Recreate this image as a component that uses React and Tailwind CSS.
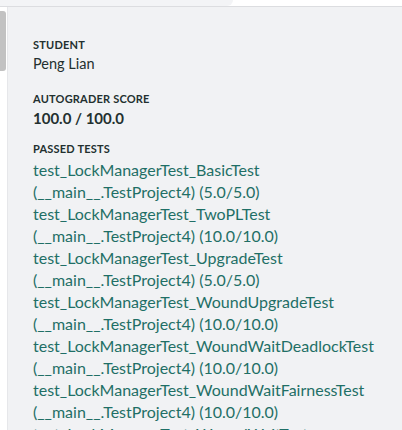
const tests = [
  ['test_LockManagerTest_BasicTest', '(5.0/5.0)'],
  ['test_LockManagerTest_TwoPLTest', '(10.0/10.0)'],
  ['test_LockManagerTest_UpgradeTest', '(5.0/5.0)'],
  ['test_LockManagerTest_WoundUpgradeTest', '(10.0/10.0)'],
  ['test_LockManagerTest_WoundWaitDeadlockTest', '(10.0/10.0)'],
  ['test_LockManagerTest_WoundWaitFairnessTest', '(10.0/10.0)'],
  ['test_LockManagerTest_WoundWaitTest', '(10.0/10.0)'],
]

export default function App() {
  return (
    <div className="w-[402px] h-[430px] overflow-hidden bg-white flex flex-col" style={{ fontFamily: 'Lato, "Open Sans", sans-serif' }}>
      {/* top strip */}
      <div className="h-[7px] shrink-0 bg-white border-b border-[#dcdde0] flex">
        <div className="w-[233px] h-full bg-[#f3f4f6] rounded-br-[12px]" />
      </div>
      <div className="flex flex-1 min-h-0">
        {/* scrollbar gutter */}
        <div className="w-[8px] shrink-0 bg-white border-r border-[#e6e7ea] pt-[4px]">
          <div className="w-[6px] h-[60px] bg-[#c2c2c2] rounded-r-[3px]" />
        </div>
        <div className="flex-1 bg-[#f1f2f4] pl-[25px] pt-[30px] text-[#23302f]">
          <div className="text-[11px] leading-[16px] font-bold uppercase tracking-[0.2px]">Student</div>
          <div className="text-[14.5px] leading-[20px] mt-[1px]">Peng Lian</div>

          <div className="text-[11px] leading-[16px] font-bold uppercase tracking-[0.2px] mt-[17px]">Autograder Score</div>
          <div className="text-[15px] leading-[20px] font-bold mt-[1px]">100.0 / 100.0</div>

          <div className="text-[11px] leading-[16px] font-bold uppercase tracking-[0.2px] mt-[13px]">Passed Tests</div>
          <div className="mt-[2px] text-[16px] leading-[22px] text-[#1f6f66]">
            {tests.map(([name, score]) => (
              <div key={name}>
                <div>{name}</div>
                <div>(__main__.TestProject4) {score}</div>
              </div>
            ))}
          </div>
        </div>
      </div>
    </div>
  )
}
